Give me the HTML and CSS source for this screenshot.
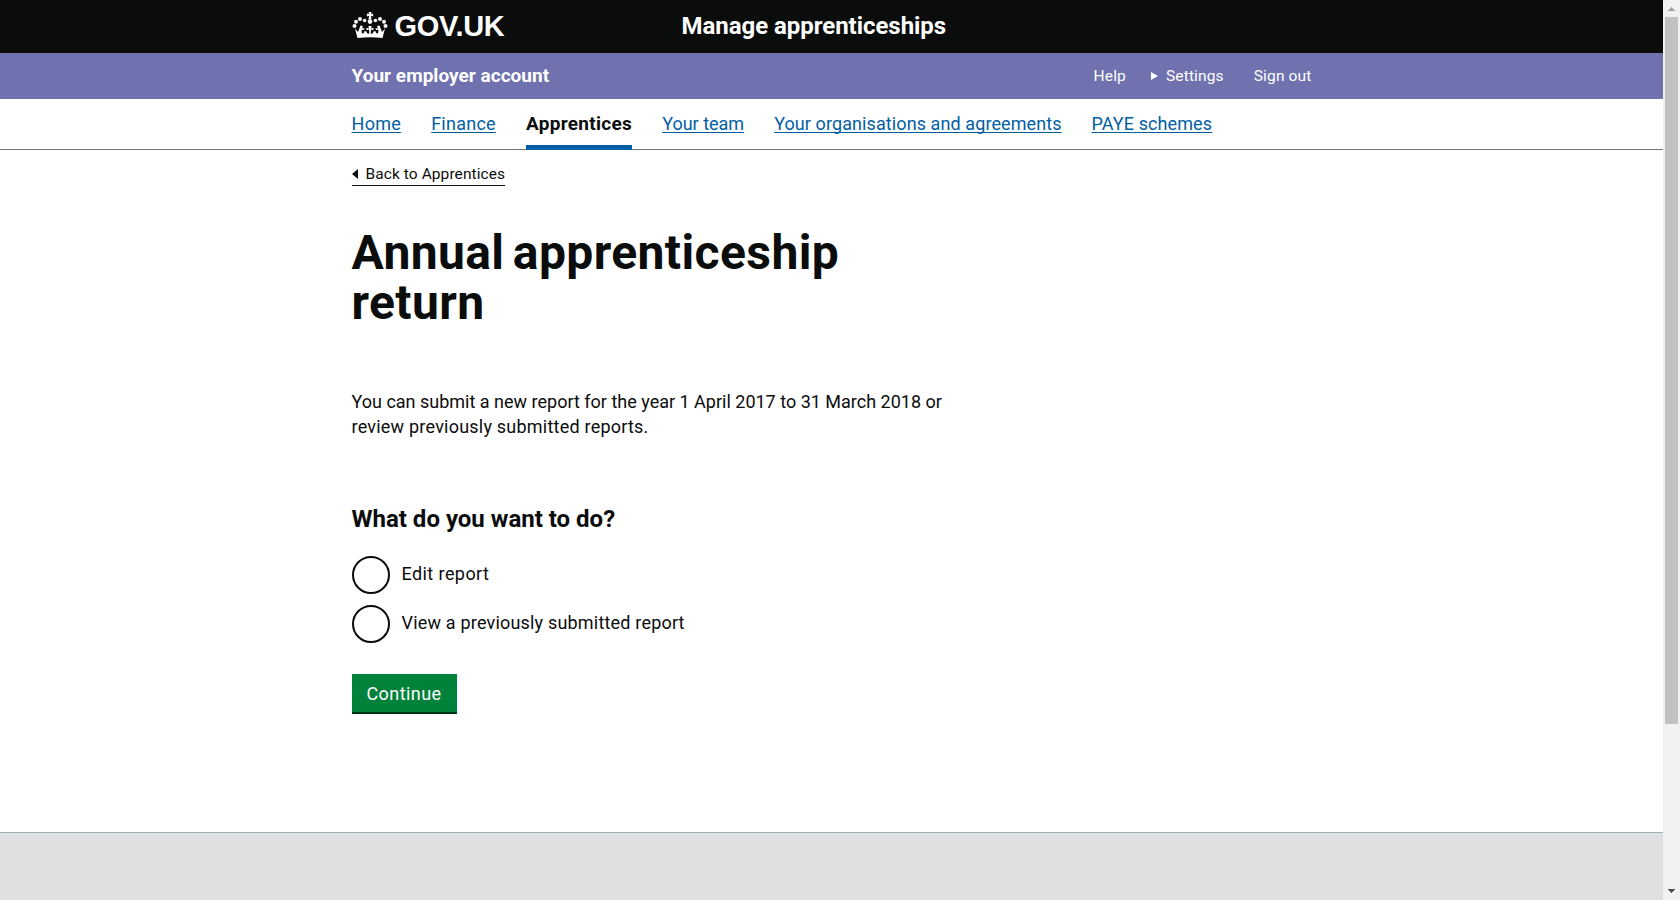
FILE: index.html
```html
<!DOCTYPE html>
<html lang="en">
<head>
<meta charset="utf-8">
<title>Annual apprenticeship return</title>
<link rel="stylesheet" href="styles.css">
</head>
<body>
<div class="viewport">
<div class="page">
  <header class="topbar">
    <div class="wrap topbar-inner">
      <a class="logo" href="#">
        <svg class="crown" viewBox="0 0 36 28" width="36" height="28" fill="#fff">
          <path d="M16.6 1h2.8l-.5 2 2.200-.6v3l-2.200-.6.6 3.400h-3l.6-3.400-2.200.6v-3l2.200.6z"/>
          <circle cx="18" cy="10.600" r="2.300"/>
          <circle cx="12.600" cy="9.500" r="1.800"/><circle cx="8" cy="8" r="2"/>
          <circle cx="4" cy="10.800" r="2"/><circle cx="2.500" cy="15" r="2"/>
          <circle cx="23.400" cy="9.500" r="1.800"/><circle cx="28" cy="8" r="2"/>
          <circle cx="32" cy="10.800" r="2"/><circle cx="33.500" cy="15" r="2"/>
          <path d="M5.500 27 3 17.500l3 3.500 2.500-6.500 2.500.5-1 2.500 2.500-.5-.5 2-2.500-.3.500 3.800c1.500.3 2.500-1 2.500-2.500l2 .5c0 1.500 1 2.500 2.800 2l-.3-4-2.500.7v-2.400l2.500.6-.7-2.400h3.400l-.7 2.400 2.500-.6v2.400l-2.500-.7-.3 4c1.800.5 2.800-.5 2.800-2l2-.5c0 1.500 1 2.800 2.500 2.500l.5-3.800-2.500.3-.5-2 2.500.5-1-2.500 2.500-.5L30 21l3-3.500L30.500 27c-8-1-17-1-25 0z"/>
        </svg>
        <span class="logo-text">GOV.UK</span>
      </a>
      <span class="service">Manage apprenticeships</span>
    </div>
  </header>
  <div class="account">
    <div class="wrap account-inner">
      <span class="account-name">Your employer account</span>
      <nav class="user-links">
        <a class="help">Help</a>
        <a class="settings"><i class="tri-right"></i><span class="settings-text">Settings</span></a>
        <a class="signout">Sign out</a>
      </nav>
    </div>
  </div>
  <nav class="mainnav">
    <div class="wrap mainnav-inner">
      <a class="n-home">Home</a>
      <a class="n-finance">Finance</a>
      <a class="current">Apprentices</a>
      <a class="n-team">Your team</a>
      <a class="n-org">Your organisations and agreements</a>
      <a class="n-paye">PAYE schemes</a>
    </div>
  </nav>
  <main class="wrap main">
    <a class="back"><i class="tri-left"></i><span class="back-text">Back to Apprentices</span></a>
    <h1>Annual apprenticeship return</h1>
    <p class="lead">You can submit a new report for the year 1 April 2017 to 31 March 2018 or<br><span class="lead-second">review previously submitted reports.</span></p>
    <h2>What do you want to do?</h2>
    <div class="options">
      <label class="option"><i class="radio"></i><span class="option-edit">Edit report</span></label>
      <label class="option"><i class="radio"></i><span class="option-view">View a previously submitted report</span></label>
    </div>
    <button class="button">Continue</button>
  </main>
  <footer class="footer"></footer>
</div>
<div class="scrollbar">
  <svg class="arrow" width="7" height="4" viewBox="0 0 7 4" fill="#a3a3a3" shape-rendering="crispEdges"><path d="M3 0h1v1h1v1h1v1h1v1H0V3h1V2h1V1h1z"/></svg>
  <i class="thumb"></i>
  <svg class="arrow arrow-down" width="7" height="4" viewBox="0 0 7 4" fill="#505050" shape-rendering="crispEdges"><path d="M0 0h7v1H6v1H5v1H4v1H3V3H2V2H1V1H0z"/></svg>
</div>
</div>
</body>
</html>
```
FILE: styles.css
```css
* { box-sizing: border-box; }
body { margin: 0; font-family: Roboto, sans-serif; font-size: 18px; color: #0b0c0c; background: #fff; }
.viewport { display: flex; height: 900px; overflow: hidden; }
.page { flex: 1; display: flex; flex-direction: column; }
.wrap { width: 960px; margin: 0 auto; }
span, a, .lead { white-space: nowrap; }

.topbar { height: 53px; background: #0b0c0c; color: #fff; }
.topbar-inner { display: flex; height: 53px; }
.logo { display: flex; width: 330px; color: #fff; text-decoration: none; }
.crown { margin: 11px 7px 0 0; }
.logo-text { font: bold 29px/53px "Liberation Sans", sans-serif; letter-spacing: -0.3px; }
.service { font-size: 24px; font-weight: 700; line-height: 52px; letter-spacing: -0.04px; }

.account { height: 46px; background: #6f72af; color: #fff; }
.account-inner { display: flex; justify-content: space-between; line-height: 45px; }
.account-name { font-size: 19px; font-weight: 700; letter-spacing: 0.03px; }
.user-links { display: flex; font-size: 15.5px; line-height: 46px; letter-spacing: 0.15px; }
.settings { display: flex; align-items: center; margin: 0 30px 0 25px; }
.tri-right { border-left: 7px solid #fff; border-top: 4px solid transparent; border-bottom: 4px solid transparent; margin: 0 8px 1px 0; }

.mainnav { height: 51px; border-bottom: 1px solid #6f777b; }
.mainnav-inner { display: flex; gap: 30px; line-height: 50px; color: #005ea5; }
.mainnav a { text-decoration: underline; text-decoration-thickness: 1px; text-decoration-skip-ink: none; text-underline-offset: 2px; }
.mainnav .current { height: 51px; font-size: 19px; font-weight: 700; letter-spacing: 0.3px; color: #0b0c0c; text-decoration: none; border-bottom: 5px solid #005ea5; }
.n-home { letter-spacing: 0.3px; }
.n-finance { letter-spacing: 0.26px; }
.n-org { letter-spacing: 0.09px; }
.n-paye { letter-spacing: 0.1px; }

.main { flex: 1; }
.back { display: flex; align-items: center; width: 153px; height: 23px; margin-top: 13px; border-bottom: 1px solid #0b0c0c; font-size: 15.5px; letter-spacing: 0.08px; }
.tri-left { border-right: 6px solid #0b0c0c; border-top: 5px solid transparent; border-bottom: 5px solid transparent; margin-right: 8px; }
h1 { width: 540px; margin: 42px 0 0; font-size: 48px; line-height: 50px; letter-spacing: 0.4px; word-spacing: -4px; }
.lead { margin: 61px 0 0; line-height: 25px; }
.lead-second { letter-spacing: 0.22px; }
h2 { margin: 65px 0 0; font-size: 24px; line-height: 30px; }
.options { display: flex; flex-direction: column; gap: 11px; margin: 22px 0 31px; }
.option { display: flex; height: 38px; align-items: center; }
.option span { line-height: 36px; padding-bottom: 2px; }
.option-edit { letter-spacing: 0.42px; }
.option-view { letter-spacing: 0.19px; }
.radio { width: 38px; height: 38px; border: 2px solid #0b0c0c; border-radius: 50%; margin-right: 12px; }
.button { padding: 1px 0 0; width: 105px; height: 40px; border: 0; border-bottom: 2px solid #003618; background: #00823b; color: #fff; font: inherit; letter-spacing: 0.45px; }

.footer { height: 68px; border-top: 1px solid #a1acb2; background: #dee0e2; }

.scrollbar { display: flex; flex-direction: column; align-items: center; width: 17px; padding: 7px 0; background: #f1f1f1; }
.arrow { display: block; }
.thumb { width: 13px; height: 707px; margin-top: 6px; background: #c1c1c1; }
.arrow-down { margin-top: auto; }
```
